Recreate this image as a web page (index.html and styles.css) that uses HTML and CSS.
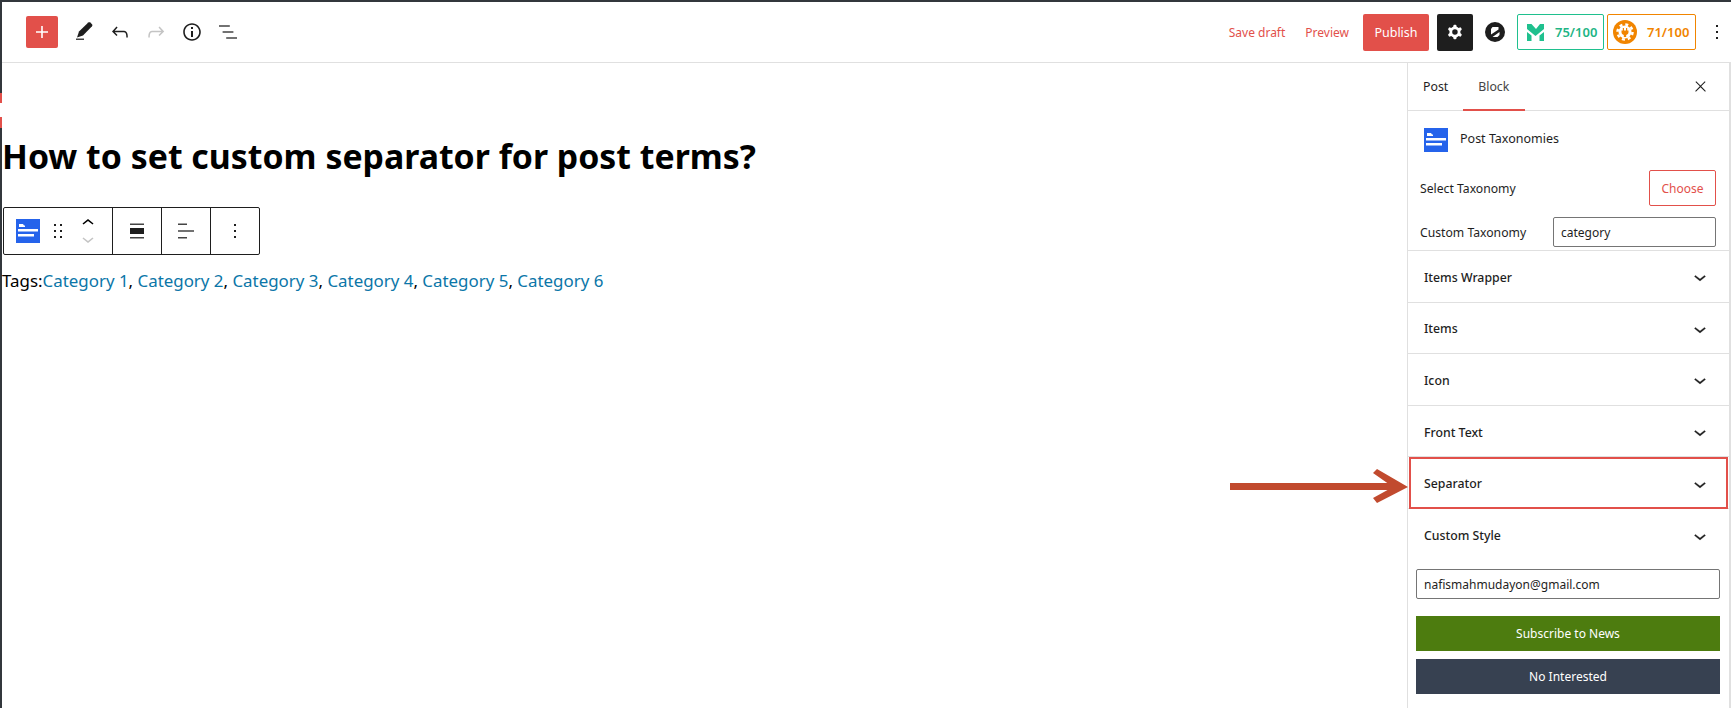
FILE: index.html
```html
<!DOCTYPE html>
<html lang="en">
<head>
<meta charset="utf-8">
<title>Post editor</title>
<link rel="stylesheet" href="styles.css">
</head>
<body>
<div class="app">
  <header class="topbar">
    <div class="tools">
      <button class="add"><svg viewBox="0 0 24 24" width="24" height="24"><path fill="currentColor" d="M18 11.200h-5.200V6h-1.600v5.200H6v1.600h5.200V18h1.600v-5.200H18z"/></svg></button>
      <svg class="ic" viewBox="0 0 24 24"><path fill="#444" d="M4 20h8v-1.500H4z"/><path d="M5 17.500l2-6 9.300-9c.6-.5 1.400-.5 2 0l1.700 1.700c.5.6.5 1.400 0 2l-9 9.300z"/></svg>
      <svg class="ic" viewBox="0 0 24 24"><path d="M18.300 11.700c-.6-.6-1.400-.9-2.300-.9H6.700l2.900-3.300-1.100-1-4.500 5L8.500 16l1-1-2.700-2.700H16c.5 0 .9.2 1.300.5 1 1 1 3.400 1 4.500v.3h1.500v-.2c0-1.500 0-4.300-1.500-5.700z"/></svg>
      <svg class="ic off" viewBox="0 0 24 24"><path d="M15.600 6.500l-1.100 1 2.900 3.300H8c-.9 0-1.700.3-2.300.9-1.400 1.500-1.400 4.200-1.400 5.600v.2h1.500v-.3c0-1.100 0-3.500 1-4.500.3-.3.7-.5 1.300-.5h9.200L14.500 15l1.100 1.100 4.600-4.600-4.600-5z"/></svg>
      <svg class="ic" viewBox="0 0 24 24"><path d="M12 3.200c-4.800 0-8.800 3.900-8.800 8.800 0 4.800 3.900 8.800 8.800 8.800 4.800 0 8.800-3.900 8.800-8.800 0-4.800-4-8.800-8.800-8.800zm0 16c-4 0-7.200-3.300-7.200-7.200C4.800 8 8 4.800 12 4.800s7.200 3.300 7.200 7.200c0 4-3.200 7.200-7.200 7.200zM11 17h2v-6h-2v6zm0-8h2V7h-2v2z"/></svg>
      <svg class="ic listview" viewBox="0 0 24 24"><path d="M13.800 5.200H3v1.500h10.800V5.200zm-3.600 12v1.500H21v-1.500H10.200zm7.200-6H6.600v1.500h10.800v-1.500z"/></svg>
    </div>
    <div class="actions">
      <span class="link save">Save draft</span>
      <span class="link preview">Preview</span>
      <button class="publish">Publish</button>
      <button class="gear"><svg viewBox="0 0 24 24" width="22" height="22"><path fill="#fff" fill-rule="evenodd" d="M10.289 4.836A1 1 0 0111.275 4h1.306a1 1 0 01.987.836l.244 1.466c.787.26 1.503.679 2.108 1.218l1.393-.522a1 1 0 011.216.437l.653 1.130a1 1 0 01-.23 1.273l-1.148.944a6.025 6.025 0 010 2.435l1.149.946a1 1 0 01.23 1.272l-.653 1.130a1 1 0 01-1.216.437l-1.394-.522c-.605.54-1.320.958-2.108 1.218l-.244 1.466a1 1 0 01-.987.836h-1.306a1 1 0 01-.986-.836l-.244-1.466a5.995 5.995 0 01-2.108-1.218l-1.394.522a1 1 0 01-1.217-.436l-.653-1.131a1 1 0 01.23-1.272l1.149-.946a6.026 6.026 0 010-2.435l-1.148-.944a1 1 0 01-.23-1.272l.653-1.131a1 1 0 011.217-.437l1.393.522a5.994 5.994 0 012.108-1.218l.244-1.466zM14.929 12a3 3 0 11-6 0 3 3 0 016 0z"/></svg></button>
      <svg class="zlogo" viewBox="0 0 20 20"><circle cx="10" cy="10" r="10" fill="#1e1e1e"/><path fill="#fff" d="M7.500 5h6v2.500L6 12.500V7zM14.500 10v3l-2 2H7.500z"/></svg>
      <div class="score green">
        <svg viewBox="0 0 17 17" width="17" height="17"><path fill="#1fc08e" d="M0 0h4.500L9 5l4-5h4v5l-8.500 7L0 5zM0 8l4.500 3.500V17H0zM17 8v9h-4.500v-5.500z"/></svg>
        <span>75/100</span>
      </div>
      <div class="score orange">
        <svg viewBox="0 0 24 24" width="24" height="24"><circle cx="12" cy="12" r="12" fill="#f18500"/><circle cx="12" cy="12" r="6.500" fill="#fff"/><circle cx="12" cy="12" r="7.500" fill="none" stroke="#fff" stroke-width="2.500" stroke-dasharray="3 2.900"/><path fill="#f18500" d="M9.800 8h1.200v2.500h2V8h1.200v2.500h1.300v1.800c0 1.400-1 2.400-2.300 2.600V17h-2.400v-2.100c-1.300-.2-2.300-1.200-2.300-2.600v-1.800h1.300z"/></svg>
        <span>71/100</span>
      </div>
      <svg class="ic more" viewBox="0 0 24 24"><path d="M13 19h-2v-2h2v2zm0-6h-2v-2h2v2zm0-6h-2V5h2v2z"/></svg>
    </div>
  </header>

  <div class="main">
    <main class="canvas">
      <span class="mark"></span>
      <h1>How to set custom separator for post terms?</h1>
      <div class="blockbar">
        <div class="group first">
          <svg class="blockicon" viewBox="0 0 24 24"><rect width="24" height="24" fill="#2563eb"/><path fill="#fff" d="M3 5h4l1 1.500h1V8H3zM2 10h20v2.500H2zM2 15h16v2.500H2z"/></svg>
          <svg class="ic drag" viewBox="0 0 24 24"><path d="M8 7h2V5H8v2zm0 6h2v-2H8v2zm0 6h2v-2H8v2zm6-14v2h2V5h-2zm0 8h2v-2h-2v2zm0 6h2v-2h-2v2z"/></svg>
          <div class="movers">
            <svg viewBox="0 0 24 24" width="24" height="24"><path d="M6.500 12.400 12 8l5.500 4.400-.9 1.200L12 10l-4.500 3.600z"/></svg>
            <svg class="off" viewBox="0 0 24 24" width="24" height="24"><path d="M17.500 11.600 12 16l-5.500-4.400.9-1.200L12 14l4.500-3.600z"/></svg>
          </div>
        </div>
        <div class="group"><svg class="ic" viewBox="0 0 24 24"><path fill="#1e1e1e" d="M5 9h14v6H5z"/><path fill="#444" d="M5 4.500h14V6H5zM5 18h14v1.500H5z"/></svg></div>
        <div class="group"><svg class="ic" viewBox="0 0 24 24"><path fill="#444" d="M4 4.500h9V6H4zM4 11.300h16v1.500H4zM4 18h9v1.500H4z"/></svg></div>
        <div class="group"><svg class="ic" viewBox="0 0 24 24"><path d="M13 19h-2v-2h2v2zm0-6h-2v-2h2v2zm0-6h-2V5h2v2z"/></svg></div>
      </div>
      <p class="terms">Tags:<a>Category 1</a>, <a>Category 2</a>, <a>Category 3</a>, <a>Category 4</a>, <a>Category 5</a>, <a>Category 6</a></p>
    </main>

    <aside class="panel">
      <div class="tabs">
        <span class="tab">Post</span>
        <span class="tab active">Block</span>
        <svg class="ic close" viewBox="0 0 24 24"><path d="M13 11.800l6.100-6.300-1-1-6.100 6.200-6.100-6.200-1 1 6.100 6.300-6.500 6.700 1 1 6.500-6.600 6.500 6.600 1-1z"/></svg>
      </div>
      <div class="card">
        <div class="title">
          <svg class="blockicon" viewBox="0 0 24 24"><rect width="24" height="24" fill="#2563eb"/><path fill="#fff" d="M3 5h4l1 1.500h1V8H3zM2 10h20v2.500H2zM2 15h16v2.500H2z"/></svg>
          <span>Post Taxonomies</span>
        </div>
        <div class="field choose-row"><label>Select Taxonomy</label><button class="choose">Choose</button></div>
        <div class="field"><label>Custom Taxonomy</label><input class="tax" value="category"></div>
      </div>
      <div class="row"><span>Items Wrapper</span><svg class="chev" viewBox="0 0 24 24"><path d="M17.500 11.600 12 16l-5.500-4.400.9-1.200L12 14l4.500-3.600z"/></svg></div>
      <div class="row"><span>Items</span><svg class="chev" viewBox="0 0 24 24"><path d="M17.500 11.600 12 16l-5.500-4.400.9-1.200L12 14l4.500-3.600z"/></svg></div>
      <div class="row"><span>Icon</span><svg class="chev" viewBox="0 0 24 24"><path d="M17.500 11.600 12 16l-5.500-4.400.9-1.200L12 14l4.500-3.600z"/></svg></div>
      <div class="row"><span>Front Text</span><svg class="chev" viewBox="0 0 24 24"><path d="M17.500 11.600 12 16l-5.500-4.400.9-1.200L12 14l4.500-3.600z"/></svg></div>
      <div class="row boxed"><span>Separator</span><svg class="chev" viewBox="0 0 24 24"><path d="M17.500 11.600 12 16l-5.500-4.400.9-1.200L12 14l4.500-3.600z"/></svg></div>
      <div class="row plain"><span>Custom Style</span><svg class="chev" viewBox="0 0 24 24"><path d="M17.500 11.600 12 16l-5.500-4.400.9-1.200L12 14l4.500-3.600z"/></svg></div>
      <div class="subscribe">
        <input class="email" value="nafismahmudayon@gmail.com">
        <button class="sub">Subscribe to News</button>
        <button class="no">No Interested</button>
      </div>
    </aside>
  </div>
  <svg class="arrow" viewBox="0 0 178 36" width="178" height="36"><path fill="#c14a2e" d="M0 15h165v7H0zM143 5l4-4 31 18-31 16-4-5 20-11z"/></svg>
</div>
</body>
</html>
```

FILE: styles.css
```css
* { box-sizing: border-box; }
html, body { margin: 0; height: 100%; overflow: hidden; }
body { font-family: "Noto Sans", "Open Sans", sans-serif; color: #1e1e1e; background: #fff; }
button, input { font-family: inherit; }
svg { display: block; flex: none; }

.app { position: relative; height: 708px; display: flex; flex-direction: column; border-top: 2px solid #32373c; border-left: 2px solid #32373c; }

.topbar { height: 61px; flex: none; display: flex; justify-content: space-between; align-items: center; border-bottom: 1px solid #e0e0e0; padding: 0 2px 0 24px; }
.tools { display: flex; align-items: center; gap: 12px; }
.add { width: 32px; height: 32px; padding: 0; border: 0; border-radius: 2px; background: #e2504a; color: #fff; display: flex; align-items: center; justify-content: center; margin-right: 2px; }
.ic { width: 24px; height: 24px; fill: #1e1e1e; }
.off { fill: #c4c4c4; }
.listview { fill: #444; }

.actions { display: flex; align-items: center; height: 37px; }
.link { font-size: 12px; color: #e2504a; }
.save { margin-right: 20px; }
.preview { margin-right: 14px; }
.publish { width: 66px; height: 37px; padding: 0; border: 0; border-radius: 2px; background: #e2504a; color: #fff; font-size: 12.500px; margin-right: 8px; }
.gear { width: 36px; height: 37px; padding: 0; border: 0; border-radius: 2px; background: #1e1e1e; display: flex; align-items: center; justify-content: center; margin-right: 12px; }
.zlogo { width: 20px; height: 20px; margin-right: 12px; }
.score { height: 36px; display: flex; align-items: center; border-radius: 2px; font-size: 13px; font-weight: 600; }
.green { width: 87px; border: 1px solid #1fc08e; color: #1fb585; padding-left: 9px; gap: 11px; margin-right: 3px; }
.orange { width: 89px; border: 1px solid #f18500; color: #f18500; padding-left: 5px; gap: 10px; margin-right: 9px; }

.main { flex: 1; min-height: 0; display: flex; }
.canvas { flex: 1; min-width: 0; position: relative; }
.mark { position: absolute; left: -2px; top: 30px; width: 2px; height: 35px; background: linear-gradient(#e2504a 0 10px, #fff 10px 24px, #e2504a 24px); }
h1 { margin: 0; padding: 71px 0 0; font-size: 33.850px; line-height: 44px; font-weight: 700; color: #000; }
.blockbar { display: inline-flex; height: 48px; margin: 29px 0 0 1px; border: 1px solid #1e1e1e; border-radius: 2px; vertical-align: top; }
.group { width: 49px; display: flex; align-items: center; justify-content: center; border-left: 1px solid #1e1e1e; }
.group.first { width: 108px; border-left: 0; justify-content: flex-start; padding-left: 12px; }
.blockicon { width: 24px; height: 24px; }
.drag { margin-left: 6px; }
.movers { margin-left: 6px; display: flex; flex-direction: column; }
.movers .off { margin-top: -8px; }
.terms { margin: 13px 0 0; font-size: 16.900px; line-height: 26px; color: #000; }
.terms a { color: #0b76a8; }

.panel { width: 324px; flex: none; border-left: 1px solid #e0e0e0; border-right: 2px solid #e0e0e0; display: flex; flex-direction: column; font-size: 12px; }
.tabs { height: 48px; flex: none; display: flex; align-items: center; border-bottom: 1px solid #e0e0e0; font-size: 12.300px; padding-left: 15px; }
.tab { height: 48px; display: flex; align-items: center; }
.tab.active { margin-left: 15px; padding: 0 16px 0 15px; border-top: 2px solid transparent; border-bottom: 2px solid #e2504a; color: #444; }
.close { width: 17px; height: 17px; margin-left: auto; margin-right: 20px; }
.card { height: 140px; flex: none; border-bottom: 1px solid #e0e0e0; padding: 17px 13px 0 12px; }
.title { display: flex; align-items: center; gap: 12px; height: 24px; padding-left: 4px; font-size: 12.500px; }
.title span { padding-bottom: 4px; }
.field { display: flex; align-items: center; justify-content: space-between; font-size: 12.200px; }
.choose-row { margin-top: 18px; height: 36px; }
.field + .field { margin-top: 11px; height: 30px; }
.choose { width: 67px; height: 36px; padding: 0; background: #fff; border: 1px solid #e2504a; border-radius: 2px; color: #e2504a; font-size: 12px; }
.tax, .email { height: 30px; border: 1px solid #757575; border-radius: 2px; background: #fff; font-size: 12px; color: #1e1e1e; padding: 0 7px; }
.tax { width: 163px; }
.row { height: 51.600px; flex: none; display: flex; align-items: center; justify-content: space-between; padding: 2px 17px 0 16px; border-bottom: 1px solid #e0e0e0; font-size: 12.300px; font-weight: 500; }
.chev { width: 24px; height: 24px; fill: #1e1e1e; stroke: #1e1e1e; stroke-width: .3; }
.boxed { position: relative; }
.boxed::after { content: ""; position: absolute; inset: 0 1px -1px 1px; border: 2px solid #e2504a; }
.plain { border-bottom: 0; }
.subscribe { padding: 8.500px 9px 0 8px; display: flex; flex-direction: column; }
.email { width: 100%; }
.subscribe button { height: 35px; padding: 0; border: 0; color: #fff; font-size: 12px; }
.sub { margin-top: 16.500px; background: #4d7c0f; }
.no { margin-top: 8px; background: #374151; }

.arrow { position: absolute; left: 1228px; top: 466px; }
```
